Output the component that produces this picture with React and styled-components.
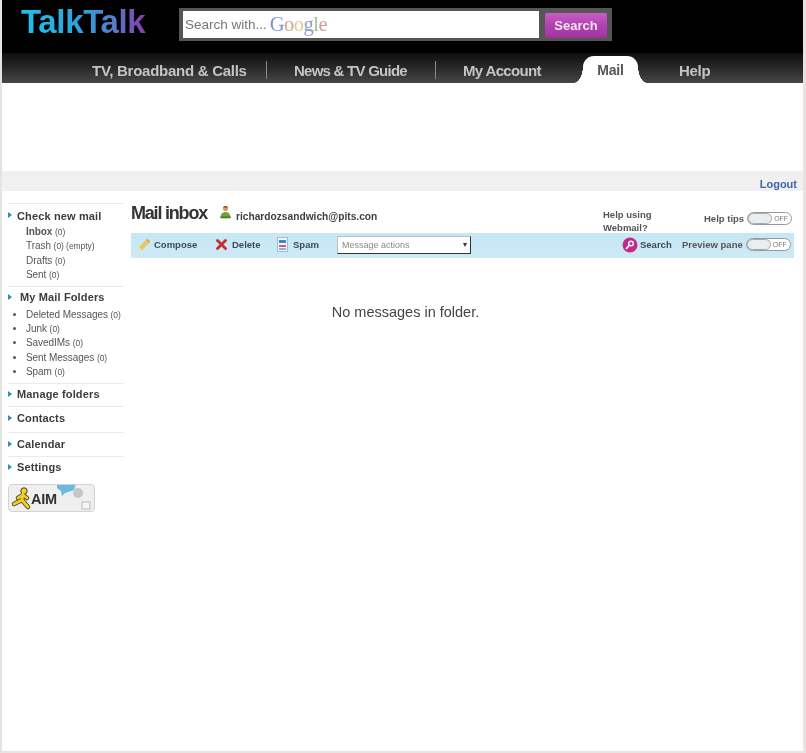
import React from "react";
import styled, { createGlobalStyle } from "styled-components";

const Global = createGlobalStyle`
  html, body { margin: 0; padding: 0; background: #fff; }
  body { font-family: "Liberation Sans", Arial, sans-serif; color: #333; }
`;

const Page = styled.div`
  width: 806px;
  height: 753px;
  box-sizing: border-box;
  overflow: hidden;
  padding: 0 3px 2px 2px;
  background: #e6e4e2;
  filter: blur(0.6px);
`;
const Sheet = styled.div`
  height: 100%;
  background: #fff;
  display: flex;
  flex-direction: column;
`;
const Masthead = styled.header`
  height: 53px;
  background: #000;
  display: flex;
  align-items: flex-start;
  box-sizing: border-box;
  padding: 8px 0 0 19px;
`;
const Logo = styled.div`
  width: 158px;
  font-size: 33px;
  line-height: 28px;
  font-weight: 700;
  letter-spacing: -0.35px;
  background: linear-gradient(90deg, #22c1e8 0%, #2aa5dc 36%, #5a78c8 60%, #7c46b0 75%, #8e3aa6 80%);
  -webkit-background-clip: text;
  background-clip: text;
  color: transparent;
`;
const SearchFrame = styled.div`
  width: 433px;
  height: 33px;
  box-sizing: border-box;
  background: #565656;
  padding: 3px 4px 3px 4px;
  display: flex;
  align-items: stretch;
  gap: 6px;
`;
const SearchInput = styled.div`
  width: 356px;
  background: #fff;
  display: flex;
  align-items: center;
  padding-left: 2px;
  box-sizing: border-box;
  font-size: 13.5px;
  color: #77777d;
`;
const GoogleMark = styled.span`
  font-family: "Liberation Serif", serif;
  font-size: 20.5px;
  letter-spacing: -0.5px;
  color: ${(p) => p.$c};
  margin-left: ${(p) => (p.$first ? "3px" : "0")};
`;
const SearchButton = styled.div`
  width: 62px;
  margin: 2px 0 0;
  border-radius: 2px;
  background: linear-gradient(180deg, #c65cc4 0%, #b23fae 55%, #a0359e 100%);
  color: #f2e4f2;
  font-size: 13px;
  font-weight: 700;
  display: flex;
  align-items: center;
  justify-content: center;
`;
const NavBar = styled.nav`
  height: 30px;
  background: linear-gradient(180deg, #0e0e0e 0%, #262626 45%, #474747 100%);
  display: flex;
  align-items: center;
  box-sizing: border-box;
  padding-left: 90px;
  color: #c4c4c4;
  font-size: 15px;
  font-weight: 700;
`;
const NavItem = styled.span`
  white-space: nowrap;
  width: ${(p) => p.$w}px;
  letter-spacing: ${(p) => p.$ls}px;
  padding-top: 4px;
`;
const NavSep = styled.span`
  width: 1px;
  height: 18px;
  background: #8a8a8a;
  margin: 4px 27px 0 0;
`;
const MailTab = styled.span`
  width: 55px;
  height: 27px;
  margin: 3px 41px 0 5px;
  box-sizing: border-box;
  background: #fff;
  border-radius: 11px 11px 0 0;
  color: #555;
  display: flex;
  align-items: center;
  justify-content: center;
  padding-top: 1px;
  font-size: 14px;
  letter-spacing: -0.2px;
  position: relative;
  &::before, &::after {
    content: "";
    position: absolute;
    bottom: 0;
    width: 9px;
    height: 17px;
  }
  &::before {
    left: -9px;
    background: radial-gradient(ellipse 9px 17px at 0 0, transparent 97%, #fff 100%);
  }
  &::after {
    right: -9px;
    background: radial-gradient(ellipse 9px 17px at 100% 0, transparent 97%, #fff 100%);
  }
`;
const AdSpace = styled.div`
  height: 88px;
`;
const LogoutBand = styled.div`
  height: 20px;
  background: #f0f0f0;
  display: flex;
  align-items: center;
  justify-content: flex-end;
  padding: 5px 6px 0 0;
  box-sizing: border-box;
  font-size: 11px;
  font-weight: 700;
  color: #3f66ad;
`;
const Body = styled.div`
  display: flex;
  flex: 1;
  padding: 12px 9px 0 6px;
  gap: 7px;
`;
const Side = styled.aside`
  width: 116px;
  flex: none;
`;
const SideBlock = styled.div`
  border-top: 1px solid #ebebeb;
  padding: ${(p) => p.$pad};
`;
const SideHead = styled.div`
  display: flex;
  align-items: center;
  height: 13px;
  font-size: 11px;
  font-weight: 700;
  letter-spacing: 0.14px;
  color: #3c3c3c;
  padding-left: ${(p) => p.$indent || 9}px;
  position: relative;
  &::before {
    content: "";
    position: absolute;
    left: 0;
    top: 3px;
    border-left: 4px solid #2b8fb6;
    border-top: 3px solid transparent;
    border-bottom: 3px solid transparent;
  }
`;
const SideList = styled.ul`
  list-style: none;
  margin: ${(p) => p.$top}px 0 0;
  padding: 0 0 0 18px;
`;
const SideItem = styled.li`
  height: 14.4px;
  line-height: 14.4px;
  font-size: 10px;
  letter-spacing: -0.06px;
  color: #555;
  font-weight: ${(p) => (p.$active ? 700 : 400)};
  white-space: nowrap;
  position: relative;
  ${(p) => p.$bullet && `
    &::before {
      content: "";
      position: absolute;
      left: -13px;
      top: 5px;
      width: 3px;
      height: 3px;
      border-radius: 50%;
      background: #555;
    }
  `}
  small { font-size: 8.5px; font-weight: 400; color: #555; }
`;
const AimBadge = styled.div`
  width: 87px;
  height: 28px;
  box-sizing: border-box;
  border: 1px solid #d2d2d2;
  border-radius: 4px;
  background: #efefef;
  margin-top: 6px;
  position: relative;
  display: flex;
  align-items: center;
  padding: 3px 0 0 4px;
  overflow: hidden;
  font-size: 14.5px;
  font-weight: 700;
  letter-spacing: -0.2px;
  color: #333;
`;
const AimArt = styled.svg`
  position: absolute;
  left: -1px;
  top: -1px;
`;
const AimLabel = styled.span`
  margin-left: 18px;
  position: relative;
`;
const Main = styled.main`
  flex: 1;
  min-width: 0;
`;
const TitleRow = styled.div`
  height: 30px;
  display: flex;
  align-items: flex-start;
`;
const Title = styled.h1`
  margin: -1px 0 0;
  font-size: 18px;
  line-height: 22px;
  font-weight: 700;
  letter-spacing: -1.2px;
  color: #333;
  width: 87px;
`;
const UserSlot = styled.span`
  margin: 2px 4px 0 1px;
`;
const UserMail = styled.span`
  font-size: 10.2px;
  font-weight: 700;
  line-height: 13px;
  margin-top: 7px;
  color: #3f3f3f;
  width: 367px;
  white-space: nowrap;
`;
const HelpLink = styled.div`
  font-size: 9.5px;
  font-weight: 700;
  line-height: 13px;
  color: #555;
  width: 72px;
  margin-top: 5px;
`;
const ToggleGroup = styled.div`
  display: flex;
  align-items: center;
  gap: 3px;
  font-size: 9.5px;
  font-weight: 700;
  color: #555;
  white-space: nowrap;
  margin-left: ${(p) => p.$ml || 0}px;
  margin-top: ${(p) => p.$mt || 0}px;
`;
const Toggle = styled.span`
  width: 45px;
  height: 13px;
  box-sizing: border-box;
  border: 1px solid #999;
  border-radius: 7px;
  background: #fff;
  position: relative;
  font-size: 7px;
  font-weight: 400;
  line-height: 11px;
  color: #777;
  text-align: right;
  padding-right: 3px;
  &::before {
    content: "";
    position: absolute;
    left: 0;
    top: 0;
    bottom: 0;
    width: 24px;
    background: #e8eef1;
    border: 1px solid #aaa;
    border-radius: 6px;
    box-sizing: border-box;
  }
`;
const Toolbar = styled.div`
  height: 25px;
  background: linear-gradient(180deg, #c6e7f4, #cdeaf6);
  display: flex;
  align-items: center;
  box-sizing: border-box;
  padding: 0 2px 2px 6px;
  font-size: 9.5px;
  font-weight: 700;
  color: #3f4a52;
`;
const Tool = styled.span`
  display: flex;
  align-items: center;
  gap: ${(p) => p.$gap}px;
  width: ${(p) => p.$w}px;
  flex: none;
  white-space: nowrap;
`;
const SelectBox = styled.div`
  width: 134px;
  flex: none;
  height: 18px;
  box-sizing: border-box;
  background: #fff;
  border: 1px solid #b9c0c4;
  border-right: 1px solid #333;
  border-bottom: 1px solid #333;
  display: flex;
  align-items: center;
  justify-content: space-between;
  padding: 0 3px 0 4px;
  font-size: 9px;
  font-weight: 400;
  color: #8a8a8a;
  margin: 0 151px 0 0;
`;
const Caret = styled.span`
  border-left: 2.5px solid transparent;
  border-right: 2.5px solid transparent;
  border-top: 4px solid #333;
`;
const Empty = styled.p`
  margin: 46px 0 0;
  text-align: center;
  font-size: 14.5px;
  line-height: 16px;
  color: #444;
  padding-right: 114px;
`;

function Pencil() {
  return (
    <svg width="14" height="14" viewBox="0 0 14 14">
      <path d="M1 13l1-4 7-7 3 3-7 7z" fill="#eec35a" />
      <path d="M9 2l1.5-1.2 2.7 2.7L12 5z" fill="#e59a4a" />
      <path d="M1 13l1-4 3 3z" fill="#f4e3b0" />
    </svg>
  );
}
function Cross() {
  return (
    <svg width="11" height="11" viewBox="0 0 11 11">
      <path d="M1.5 1.5l8 8M9.5 1.5l-8 8" stroke="#c92a2a" strokeWidth="2.8" strokeLinecap="round" />
    </svg>
  );
}
function SpamIcon() {
  return (
    <svg width="11" height="15" viewBox="0 0 11 15">
      <rect x="0.5" y="0.5" width="10" height="14" fill="#f3f6fa" stroke="#9cbcdc" />
      <rect x="2" y="3" width="7" height="3" fill="#3f86c7" />
      <rect x="2" y="8" width="7" height="2" fill="#d95a6a" />
      <rect x="2" y="11" width="7" height="2" fill="#8bb6dc" />
    </svg>
  );
}
function Lens() {
  return (
    <svg width="16" height="16" viewBox="0 0 16 16">
      <circle cx="8" cy="8" r="7.5" fill="#c42a8c" />
      <circle cx="9" cy="6.5" r="3" fill="#fff" />
      <circle cx="9" cy="6.5" r="1.6" fill="#c42a8c" />
      <path d="M6.8 8.8L4 12" stroke="#fff" strokeWidth="1.8" />
    </svg>
  );
}
function User() {
  return (
    <svg width="13" height="15" viewBox="0 0 13 15">
      <circle cx="6.5" cy="3.5" r="2.6" fill="#d99a5a" />
      <path d="M4 2.4c.6-1.6 4.4-1.6 5 0z" fill="#7a3d1e" />
      <path d="M1.5 13c0-4 2-6 5-6s5 2 5 6z" fill="#6fa33c" />
      <rect x="1.5" y="11.5" width="10" height="1.8" fill="#4a7d25" />
    </svg>
  );
}
const manLimbs = "M15 10L14 16L6 20M14 16L20 23M15 11L19 14M15 11L10 14";

const folders = [
  ["Deleted Messages", "(0)"],
  ["Junk", "(0)"],
  ["SavedIMs", "(0)"],
  ["Sent Messages", "(0)"],
  ["Spam", "(0)"],
];

export default function App() {
  return (
    <>
      <Global />
      <Page>
        <Sheet>
          <Masthead>
            <Logo>TalkTalk</Logo>
            <SearchFrame>
              <SearchInput>
                Search with...
                <GoogleMark $first $c="#7f94cc">G</GoogleMark>
                <GoogleMark $c="#d0a095">o</GoogleMark>
                <GoogleMark $c="#dcca90">o</GoogleMark>
                <GoogleMark $c="#8d9dcc">g</GoogleMark>
                <GoogleMark $c="#9dc098">l</GoogleMark>
                <GoogleMark $c="#d0a095">e</GoogleMark>
              </SearchInput>
              <SearchButton>Search</SearchButton>
            </SearchFrame>
          </Masthead>
          <NavBar>
            <NavItem $w={174} $ls={-0.27}>TV, Broadband &amp; Calls</NavItem>
            <NavSep />
            <NavItem $w={141} $ls={-0.75}>News &amp; TV Guide</NavItem>
            <NavSep />
            <NavItem $w={115} $ls={-0.65}>My Account</NavItem>
            <MailTab>Mail</MailTab>
            <NavItem $w={40} $ls={-0.3}>Help</NavItem>
          </NavBar>
          <AdSpace />
          <LogoutBand>Logout</LogoutBand>
          <Body>
            <Side>
              <SideBlock $pad="5px 0 3px">
                <SideHead>Check new mail</SideHead>
                <SideList $top={3}>
                  <SideItem $active>Inbox <small>(0)</small></SideItem>
                  <SideItem>Trash <small>(0) (empty)</small></SideItem>
                  <SideItem>Drafts <small>(0)</small></SideItem>
                  <SideItem>Sent <small>(0)</small></SideItem>
                </SideList>
              </SideBlock>
              <SideBlock $pad="4px 0 3px">
                <SideHead $indent={12}>My Mail Folders</SideHead>
                <SideList $top={4}>
                  {folders.map(([name, count]) => (
                    <SideItem $bullet key={name}>{name} <small>{count}</small></SideItem>
                  ))}
                </SideList>
              </SideBlock>
              <SideBlock $pad="4px 0 5px">
                <SideHead>Manage folders</SideHead>
              </SideBlock>
              <SideBlock $pad="5px 0 7px">
                <SideHead>Contacts</SideHead>
              </SideBlock>
              <SideBlock $pad="5px 0 5px">
                <SideHead>Calendar</SideHead>
              </SideBlock>
              <SideBlock $pad="4px 0 4px">
                <SideHead>Settings</SideHead>
              </SideBlock>
              <AimBadge>
                <AimArt width="87" height="28" viewBox="0 0 87 28">
                  <path d="M49 0h19l-2 6-9 3-3 3-1-5-4-3z" fill="#6bb8e0" />
                  <circle cx="70" cy="9" r="5" fill="#c5c5c8" />
                  <rect x="74" y="18" width="8" height="7" fill="#f6f6f6" stroke="#bbb" />
                  <path d={manLimbs} stroke="#4a4320" strokeWidth="4.5" fill="none" strokeLinecap="round" strokeLinejoin="round" />
                  <circle cx="16" cy="7" r="3.2" fill="#f2cf2a" stroke="#4a4320" />
                  <path d={manLimbs} stroke="#f2cf2a" strokeWidth="2.8" fill="none" strokeLinecap="round" strokeLinejoin="round" />
                </AimArt>
                <AimLabel>AIM</AimLabel>
              </AimBadge>
            </Side>
            <Main>
              <TitleRow>
                <Title>Mail inbox</Title>
                <UserSlot><User /></UserSlot>
                <UserMail>richardozsandwich@pits.con</UserMail>
                <HelpLink>Help using<br />Webmail?</HelpLink>
                <ToggleGroup $ml={29} $mt={9}>Help tips <Toggle>OFF</Toggle></ToggleGroup>
              </TitleRow>
              <Toolbar>
                <Tool $w={79} $gap={3}><Pencil />Compose</Tool>
                <Tool $w={61} $gap={5}><Cross />Delete</Tool>
                <Tool $w={60} $gap={5}><SpamIcon />Spam</Tool>
                <SelectBox>Message actions<Caret /></SelectBox>
                <Tool $w={60} $gap={2}><Lens />Search</Tool>
                <ToggleGroup $ml={0}>Preview pane <Toggle>OFF</Toggle></ToggleGroup>
              </Toolbar>
              <Empty>No messages in folder.</Empty>
            </Main>
          </Body>
        </Sheet>
      </Page>
    </>
  );
}
